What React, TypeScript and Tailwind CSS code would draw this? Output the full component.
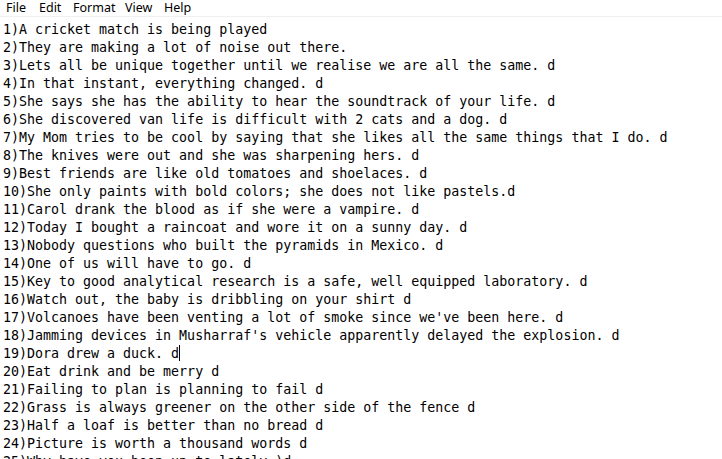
import React from "react";

const lines = [
  "1)A cricket match is being played",
  "2)They are making a lot of noise out there.",
  "3)Lets all be unique together until we realise we are all the same. d",
  "4)In that instant, everything changed. d",
  "5)She says she has the ability to hear the soundtrack of your life. d",
  "6)She discovered van life is difficult with 2 cats and a dog. d",
  "7)My Mom tries to be cool by saying that she likes all the same things that I do. d",
  "8)The knives were out and she was sharpening hers. d",
  "9)Best friends are like old tomatoes and shoelaces. d",
  "10)She only paints with bold colors; she does not like pastels.d",
  "11)Carol drank the blood as if she were a vampire. d",
  "12)Today I bought a raincoat and wore it on a sunny day. d",
  "13)Nobody questions who built the pyramids in Mexico. d",
  "14)One of us will have to go. d",
  "15)Key to good analytical research is a safe, well equipped laboratory. d",
  "16)Watch out, the baby is dribbling on your shirt d",
  "17)Volcanoes have been venting a lot of smoke since we've been here. d",
  "18)Jamming devices in Musharraf's vehicle apparently delayed the explosion. d",
  "19)Dora drew a duck. d",
  "20)Eat drink and be merry d",
  "21)Failing to plan is planning to fail d",
  "22)Grass is always greener on the other side of the fence d",
  "23)Half a loaf is better than no bread d",
  "24)Picture is worth a thousand words d",
  "25)Why have you been up to lately:)d",
];

export default function App() {
  return (
    <div className="w-[722px] h-[459px] overflow-hidden bg-white text-black">
      <div
        className="flex h-[17px] items-center pl-[6px] border-b border-[#f0f0f0] text-[12.5px] leading-none"
        style={{ fontFamily: '"Noto Sans", "Liberation Sans", sans-serif' }}
      >
        <span className="w-[33px]">File</span>
        <span className="w-[34px]">Edit</span>
        <span className="w-[52px]">Format</span>
        <span className="w-[39px]">View</span>
        <span>Help</span>
      </div>
      <div
        className="pl-[3px] pt-[4px] text-[13.3px] leading-[18px] whitespace-pre"
        style={{ fontFamily: '"DejaVu Sans Mono", "Liberation Mono", monospace' }}
      >
        {lines.map((l, i) => (
          <div key={i} className="h-[18px]">
            {l}
            {i === 18 && (
              <span className="inline-block w-px h-[16px] bg-black align-[-3px]" />
            )}
          </div>
        ))}
      </div>
    </div>
  );
}
